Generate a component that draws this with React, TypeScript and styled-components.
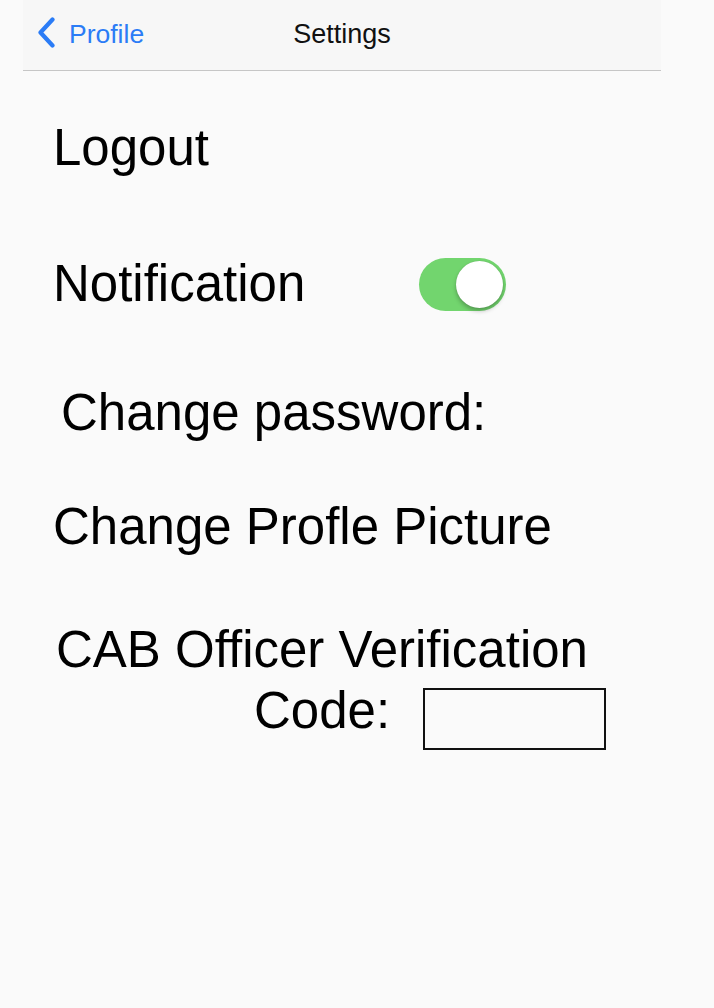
import React from "react";
import styled, { createGlobalStyle } from "styled-components";

const Global = createGlobalStyle`
  html, body {
    margin: 0;
    padding: 0;
    background: #fafafa;
  }
  body {
    font-family: "Liberation Sans", Arial, Helvetica, sans-serif;
    color: #000;
  }
`;

const Page = styled.div`
  width: 714px;
  min-height: 1008px;
  background: #fafafa;
`;

const NavBar = styled.header`
  margin-left: 23px;
  width: 638px;
  height: 71px;
  box-sizing: border-box;
  padding: 0 15px 2px 15px;
  background: #f7f7f7;
  border-bottom: 1px solid #c6c6c6;
  display: grid;
  grid-template-columns: 1fr auto 1fr;
  align-items: center;
`;

const BackButton = styled.button`
  justify-self: start;
  display: flex;
  align-items: center;
  gap: 14px;
  padding: 0;
  border: 0;
  background: none;
  color: #2b7cf6;
  font-family: "Liberation Sans", Arial, sans-serif;
  font-size: 26.5px;
  line-height: 30px;
  cursor: pointer;
  svg {
    margin-bottom: 4px;
  }
`;

const Title = styled.h1`
  margin: 0;
  font-size: 27px;
  line-height: 32px;
  font-weight: 400;
  color: #111;
`;

const Content = styled.main`
  display: flex;
  flex-direction: column;
  padding: 0 50px 0 53px;
`;

const Row = styled.div<{ $gap: number; $indent?: number }>`
  margin-top: ${(p) => p.$gap}px;
  padding-left: ${(p) => p.$indent ?? 0}px;
  display: flex;
  align-items: center;
  font-size: 51px;
  line-height: 60px;
`;

const Label = styled.span<{ $width?: number }>`
  ${(p) => (p.$width ? `width: ${p.$width}px;` : "")}
  flex: none;
`;

const Switch = styled.div<{ $on: boolean }>`
  width: 87px;
  height: 53px;
  box-sizing: border-box;
  padding: 3px;
  border-radius: 27px;
  background: ${(p) => (p.$on ? "#72d56e" : "#e5e5e5")};
  display: flex;
  align-items: center;
  justify-content: ${(p) => (p.$on ? "flex-end" : "flex-start")};
`;

const Knob = styled.div`
  width: 47px;
  height: 47px;
  border-radius: 50%;
  background: #fff;
  box-shadow: 0 3px 4px rgba(0, 0, 0, 0.25), 0 0 1px rgba(0, 0, 0, 0.2);
`;

const VerifyBlock = styled.div<{ $gap: number }>`
  margin-top: ${(p) => p.$gap}px;
  margin-left: -3px;
  width: 544px;
  display: grid;
  grid-template-columns: minmax(0, 1fr) auto minmax(0, 1fr);
  font-size: 51px;
  line-height: 61px;
`;

const VerifyTitle = styled.div`
  grid-column: 1 / -1;
  text-align: center;
`;

const CodeLabel = styled.div`
  grid-column: 2;
`;

const CodeInput = styled.input`
  grid-column: 3;
  justify-self: start;
  align-self: start;
  margin: 8px 0 0 33px;
  width: 183px;
  height: 62px;
  box-sizing: border-box;
  border: 2px solid #111;
  background: #fafafa;
  padding: 0 8px;
  font-size: 24px;
  outline: none;
`;

const Chevron = () => (
  <svg width="17" height="31" viewBox="0 0 17 31" aria-hidden="true">
    <polyline
      points="14.5,2.5 2.5,15.5 14.5,28.5"
      fill="none"
      stroke="#2b7cf6"
      strokeWidth="4.2"
      strokeLinecap="round"
      strokeLinejoin="round"
    />
  </svg>
);

export default function App() {
  const [on, setOn] = React.useState(true);
  return (
    <Page>
      <Global />
      <NavBar>
        <BackButton>
          <Chevron />
          Profile
        </BackButton>
        <Title>Settings</Title>
        <span />
      </NavBar>
      <Content>
        <Row $gap={47}>
          <Label>Logout</Label>
        </Row>
        <Row $gap={76}>
          <Label $width={366}>Notification</Label>
          <Switch $on={on} onClick={() => setOn(!on)}>
            <Knob />
          </Switch>
        </Row>
        <Row $gap={69} $indent={8}>
          <Label>Change password:</Label>
        </Row>
        <Row $gap={54}>
          <Label>Change Profle Picture</Label>
        </Row>
        <VerifyBlock $gap={62}>
          <VerifyTitle>CAB Officer Verification</VerifyTitle>
          <CodeLabel>Code:</CodeLabel>
          <CodeInput type="text" />
        </VerifyBlock>
      </Content>
    </Page>
  );
}
